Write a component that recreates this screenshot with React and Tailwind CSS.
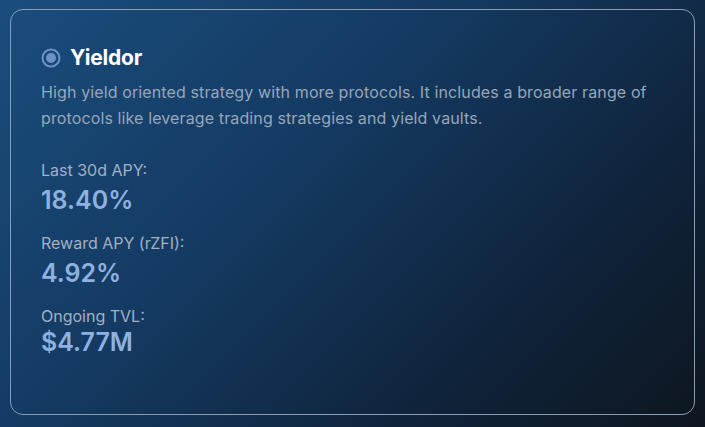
import React from 'react';

function RadioDot() {
  return (
    <svg width="20" height="20" viewBox="0 0 20 20" className="shrink-0">
      <circle cx="10" cy="10" r="8.5" fill="none" stroke="#6f92c4" strokeWidth="2" />
      <circle cx="10" cy="10" r="5" fill="#6f92c4" />
    </svg>
  );
}

function Stat({ label, value, tight = false }) {
  return (
    <div className="flex flex-col">
      <span className="text-[16px] leading-[22px] text-[#a3b1c2]">{label}</span>
      <span
        className={`text-[25px] font-semibold leading-[30px] text-[#8fb1df] ${tight ? 'mt-0' : 'mt-[4px]'}`}
      >
        {value}
      </span>
    </div>
  );
}

export default function App() {
  return (
    <div
      className="h-[427px] w-[705px] bg-[linear-gradient(135deg,#1a4d7d_0%,#143a62_40%,#0f2238_75%,#0e1620_100%)] pt-[9px] pl-[10px]"
      style={{ fontFamily: 'Inter, "Liberation Sans", sans-serif' }}
    >
      <div className="flex h-[406px] w-[685px] flex-col rounded-[13px] border border-[#8a9db5] px-[30px] pt-[34px]">
        <div className="flex items-center gap-[9px]">
          <RadioDot />
          <h2 className="text-[21px] font-bold leading-[28px] tracking-[-0.2px] text-white">Yieldor</h2>
        </div>
        <p className="mt-[7px] text-[16px] leading-[26px] tracking-[0.12px] text-[#97a7b9]">
          High yield oriented strategy with more protocols. It includes a broader range of protocols like leverage trading strategies and yield vaults.
        </p>
        <div className="mt-[28px] flex flex-col gap-[17px]">
          <Stat label="Last 30d APY:" value="18.40%" />
          <Stat label="Reward APY (rZFI):" value="4.92%" />
          <Stat label="Ongoing TVL:" value="$4.77M" tight />
        </div>
      </div>
    </div>
  );
}
